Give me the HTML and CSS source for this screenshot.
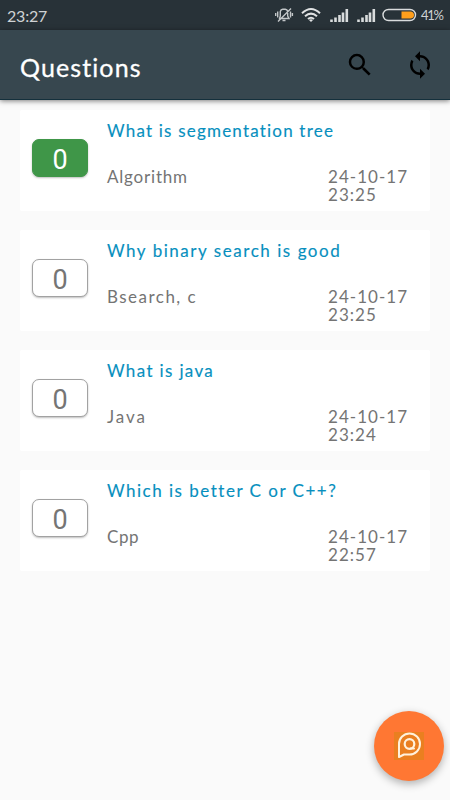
FILE: index.html
```
<!DOCTYPE html>
<html lang="en">
<head>
<meta charset="utf-8">
<title>Questions</title>
<link rel="stylesheet" href="styles.css">
</head>
<body>
<div class="status">
  <span class="clock">23:27</span>
  <svg class="status-icons" width="142" height="16" viewBox="275 7 142 16" fill="none">
    <g stroke="#c3c7c9" stroke-width="1.4">
      <path d="M279.5 18.5h9.5l-1.3-2.5v-4.5q-.5-2-2.4-2.200h-2.600q-1.900.2-2.400 2.200v4.500zM282.500 20.500h3M277.700 11.500v6M275.700 13v3M290.500 11.500v6M292.400 13v3M278 21.500 291 8.500"/>
    </g>
    <g stroke="#e0e2e3" stroke-width="2">
      <path d="M302 13.200q9-8.400 18 0M305 16.300q6-5.400 12 0M308 19.100q3-2.600 6 0"/>
    </g>
    <path fill="#e0e2e3" d="M311 22l-2-2q2-1.500 4 0z"/>
    <path stroke="#d9dcdd" stroke-width="2.600" d="M331.500 22v-2.500M335.500 22v-4.500M339.500 22v-7M343 22v-9.500M346.800 22V9M358.500 22v-2.500M362.500 22v-4.500M366.500 22v-7M370 22v-9.500M373.800 22V9"/>
    <rect x="383" y="9.500" width="32.500" height="11" rx="5.500" stroke="#d9dcdd" stroke-width="1.400"/>
    <path fill="#ff9f1c" d="M401.500 11.500h9.500q3 .5 3 3.500t-3 3.500h-9.500z"/>
  </svg>
  <span class="battery">41%</span>
</div>
<header class="toolbar">
  <h1>Questions</h1>
  <svg class="action" viewBox="0 0 24 24"><path d="M15.500 14h-.79l-.28-.27A6.470 6.470 0 0 0 16 9.500 6.500 6.500 0 1 0 9.500 16c1.610 0 3.090-.59 4.230-1.570l.27.28v.79l5 4.990L20.490 19l-4.990-5zm-6 0C7.010 14 5 11.990 5 9.500S7.010 5 9.500 5 14 7.010 14 9.500 11.990 14 9.500 14z"/></svg>
  <svg class="action" viewBox="0 0 24 24"><path d="M12 4V1L8 5l4 4V6c3.310 0 6 2.690 6 6 0 1.010-.25 1.970-.7 2.800l1.460 1.460A7.930 7.930 0 0 0 20 12c0-4.420-3.580-8-8-8zm0 14c-3.310 0-6-2.690-6-6 0-1.010.25-1.970.7-2.800L5.240 7.740A7.930 7.930 0 0 0 4 12c0 4.420 3.580 8 8 8v3l4-4-4-4v3z"/></svg>
</header>
<main class="list">
  <article class="card">
    <div class="count answered">0</div>
    <h2 class="t1">What is segmentation tree</h2>
    <div class="tag g1">Algorithm</div>
    <div class="date"><span>24-10-17</span><span>23:25</span></div>
  </article>
  <article class="card">
    <div class="count">0</div>
    <h2 class="t2">Why binary search is good</h2>
    <div class="tag g2">Bsearch, c</div>
    <div class="date"><span>24-10-17</span><span>23:25</span></div>
  </article>
  <article class="card">
    <div class="count">0</div>
    <h2 class="t3">What is java</h2>
    <div class="tag g3">Java</div>
    <div class="date"><span>24-10-17</span><span>23:24</span></div>
  </article>
  <article class="card">
    <div class="count">0</div>
    <h2 class="t4">Which is better C or C++?</h2>
    <div class="tag g4">Cpp</div>
    <div class="date"><span>24-10-17</span><span>22:57</span></div>
  </article>
</main>
<button class="fab" aria-label="Ask a question">
  <svg width="30" height="28" viewBox="0 0 30 28" fill="none" stroke="#fff1dc" stroke-linecap="round" stroke-linejoin="round">
    <rect width="30" height="28" fill="#ea7f20" stroke="none"/>
    <path stroke-width="2" d="M5 25V12A10.500 10.500 0 1 1 15.500 22.500H10z"/>
    <circle cx="15.500" cy="12" r="4.800" stroke-width="2.200"/>
    <path stroke-width="2" d="M16.500 16.600H20"/>
  </svg>
</button>
</body>
</html>
```
FILE: styles.css
```
* { box-sizing: border-box; }
body {
  margin: 0;
  height: 800px;
  overflow: hidden;
  background: #fafafa;
  font-family: Lato, "Liberation Sans", sans-serif;
}
h1, h2 { margin: 0; }
.status {
  height: 30px;
  display: flex;
  align-items: center;
  padding: 0 8px 0 7px;
  background: #283238;
  color: #cfd2d4;
}
.clock { font-size: 16px; line-height: 20px; letter-spacing: -0.2px; padding-top: 2px; }
.status-icons { margin-left: auto; }
.battery { width: 21px; margin-left: 4px; font-size: 13px; letter-spacing: -1.3px; white-space: nowrap; }
.toolbar {
  position: relative;
  height: 70px;
  display: flex;
  align-items: center;
  gap: 30px;
  padding: 0 15px 0 20px;
  background: #37474f;
  border-bottom: 1px solid #14303c;
  box-shadow: 0 1px 5px rgba(0, 0, 0, .5);
}
.toolbar h1 {
  flex: 1;
  padding-top: 5px;
  color: #fff;
  font-size: 25px;
  line-height: 30px;
  font-weight: 400;
  letter-spacing: 1.1px;
  -webkit-text-stroke: .3px #fff;
}
.action { width: 30px; height: 30px; fill: #000; }
.list { display: grid; gap: 19px; padding: 10px 20px; }
.card {
  height: 101px;
  display: grid;
  grid-template-columns: 87px 221px 1fr;
  grid-template-rows: 57px 44px;
  background: #fff;
  border-radius: 2px;
}
.count {
  grid-row: 1 / 3;
  width: 56px;
  height: 38px;
  margin: 29px 0 0 12px;
  border: 1px solid #a2a2a2;
  border-radius: 7px;
  background: #fff;
  box-shadow: 0 1px 2px rgba(0, 0, 0, .25);
  color: #757575;
  font: 400 27px/41px Roboto, sans-serif;
  text-align: center;
}
.answered { background: #3f9648; border-color: #3f9648; color: #fff; }
.card h2 {
  grid-column: 2 / 4;
  padding-top: 11px;
  color: #078fbe;
  font-size: 17px;
  line-height: 20px;
  font-weight: 400;
  white-space: nowrap;
  -webkit-text-stroke: .15px #078fbe;
}
.tag, .date { color: #747474; font-size: 17px; line-height: 20px; }
.date { line-height: 17.5px; padding-top: 1px; letter-spacing: 1.05px; }
.date span { display: block; }
.t1 { letter-spacing: 1.2px; }
.t2 { letter-spacing: 1.54px; }
.t3 { letter-spacing: 1.35px; }
.t4 { letter-spacing: 1.5px; }
.g1 { letter-spacing: .8px; }
.g2 { letter-spacing: 1.5px; }
.g3 { letter-spacing: 1.9px; }
.g4 { letter-spacing: .6px; }
.fab {
  position: absolute;
  left: 374px;
  top: 711px;
  width: 70px;
  height: 70px;
  padding: 0;
  border: 0;
  border-radius: 50%;
  display: grid;
  place-items: center;
  background: #ff7733;
  box-shadow: 0 3px 8px rgba(0, 0, 0, .3);
}
```
